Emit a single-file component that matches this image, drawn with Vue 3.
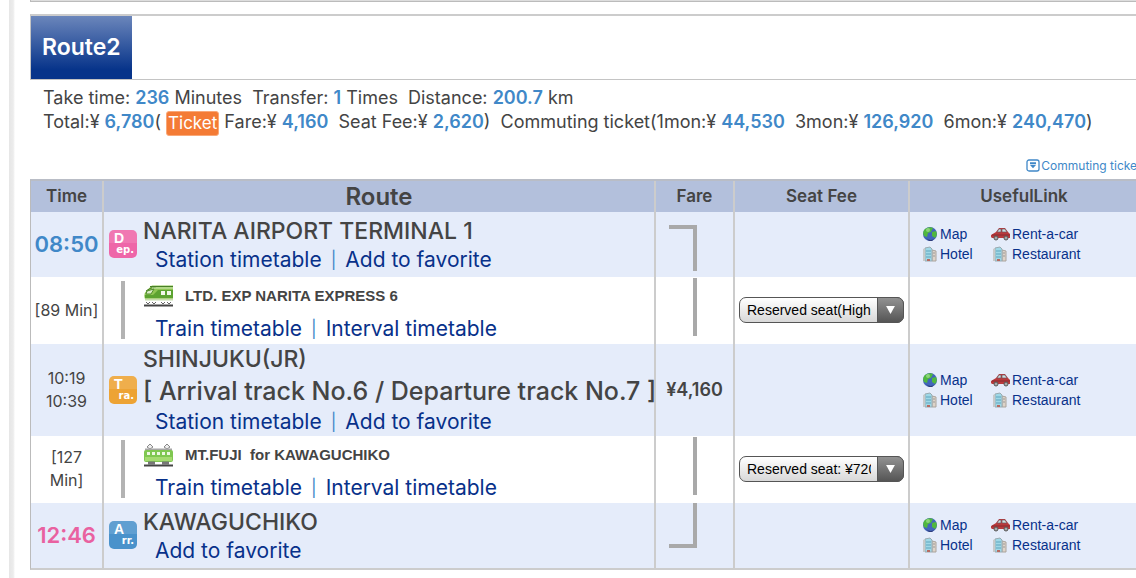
<script setup>
const rows = [
  {
    kind: 'station', mark: ['D', 'ep.'], tone: 'dep', times: ['08:50'], timeClass: 'start',
    name: 'NARITA AIRPORT TERMINAL 1', links: ['Station timetable', 'Add to favorite'],
    fare: 'top', useful: true,
  },
  {
    kind: 'ride', icon: 'express', times: ['[89 Min]'], train: 'LTD. EXP NARITA EXPRESS 6',
    links: ['Train timetable', 'Interval timetable'], fare: 'mid',
    seats: ['Reserved seat(High-season)', 'Non-reserved seat'],
  },
  {
    kind: 'station', mark: ['T', 'ra.'], tone: 'tra', times: ['10:19', '10:39'],
    name: 'SHINJUKU(JR)', track: '[ Arrival track No.6 / Departure track No.7 ]',
    links: ['Station timetable', 'Add to favorite'], price: '¥4,160', useful: true,
  },
  {
    kind: 'ride', icon: 'local', times: ['[127', 'Min]'], train: 'MT.FUJI\u00a0 for KAWAGUCHIKO',
    links: ['Train timetable', 'Interval timetable'], fare: 'mid',
    seats: ['Reserved seat: ¥720', 'Non-reserved seat'],
  },
  {
    kind: 'station', mark: ['A', 'rr.'], tone: 'arr', times: ['12:46'], timeClass: 'goal',
    name: 'KAWAGUCHIKO', links: ['Add to favorite'], fare: 'end', useful: true,
  },
]
const useful = [
  { label: 'Map', icon: 'globe' },
  { label: 'Rent-a-car', icon: 'car' },
  { label: 'Hotel', icon: 'building' },
  { label: 'Restaurant', icon: 'building' },
]
</script>

<template>
  <div class="page">
    <div class="rail"></div>
    <main class="content">
      <div class="previous"></div>
      <header class="routebar"><h2>Route2</h2></header>

      <section class="summary">
        <p>Take time: <b>236</b> Minutes&nbsp; Transfer: <b>1</b>&nbsp;Times&nbsp; Distance: <b>200.7</b> km</p>
        <p>Total:¥ <b>6,780</b>( <span class="ticket">Ticket</span> Fare:¥ <b>4,160</b>&nbsp; Seat Fee:¥ <b>2,620</b>)&nbsp; Commuting ticket(1mon:¥ <b>44,530</b>&nbsp; 3mon:¥ <b>126,920</b>&nbsp; 6mon:¥ <b>240,470</b>)</p>
      </section>

      <div class="more">
        <a href="#">
          <svg width="14" height="13" viewBox="0 0 14 13"><rect x="1" y="1" width="12" height="11" rx="2" fill="#fff" stroke="#4088c8" stroke-width="1.3"/><path d="M4 3.2h6v2H4zM4 6h6L7 9.3z" fill="#4088c8"/></svg>Commuting ticket</a>
      </div>

      <table>
        <colgroup><col class="c-time"><col class="c-route"><col class="c-fare"><col class="c-seat"><col></colgroup>
        <thead>
          <tr><th>Time</th><th class="big">Route</th><th>Fare</th><th>Seat Fee</th><th>UsefulLink</th></tr>
        </thead>
        <tbody>
          <tr v-for="(r, i) in rows" :key="i" :class="r.kind">
            <td class="time" :class="r.timeClass"><div v-for="t in r.times" :key="t">{{ t }}</div></td>
            <td>
              <div class="stop">
                <div class="side">
                  <svg v-if="r.mark" class="mark" width="28" height="28" viewBox="0 0 28 28" :class="r.tone">
                    <rect width="28" height="28" rx="5"/>
                    <path d="M5 0h18a5 5 0 0 1 5 5v8H0V5a5 5 0 0 1 5-5z" fill="#fff" opacity=".12"/>
                    <text x="5" y="13" class="initial">{{ r.mark[0] }}</text>
                    <text x="25" y="23" text-anchor="end" class="rest">{{ r.mark[1] }}</text>
                  </svg>
                  <div v-else class="bar"></div>
                </div>
                <div class="info" :class="{ padded: r.mark && !r.track, ridden: r.train }">
                  <div v-if="r.name" class="name">{{ r.name }}</div>
                  <div v-if="r.track" class="track">{{ r.track }}</div>
                  <div v-if="r.train" class="train">
                    <svg v-if="r.icon === 'express'" width="29" height="22" viewBox="0 0 29 22">
                      <path d="M8 .5h21V14H1Q-1 9 3 5z" fill="#8fc653"/>
                      <path d="M6 1.5h23M2 6Q7 2 12 2" stroke="#477f27" fill="none"/>
                      <path d="M8 3h21" stroke="#d3eabb"/>
                      <path d="M3 6l7-2-3 5H2z" fill="#dceec9" stroke="#518b2d"/>
                      <path d="M1 10h8l5-5h15v8H1z" fill="#5ca331"/>
                      <path d="M17 6h4v4h-4zM23 6h4v4h-4z" fill="#f2f8e9"/>
                      <path d="M1 14.500h28" stroke="#c7dcae" stroke-width="2"/>
                      <path d="M2 17l2 2 2-2M8 17l2 2 2-2M17 17l2 2 2-2M23 17l2 2 2-2" fill="none" stroke="#666"/>
                      <path d="M0 20.500h29" stroke="#444" stroke-width="2"/>
                    </svg>
                    <svg v-else width="29" height="24" viewBox="0 0 29 24">
                      <path d="M6 1L3 4l3 2 3-2zM23 1l-3 3 3 2 3-2z" fill="#eee" stroke="#888"/>
                      <path d="M1 6.500h27" stroke="#a6a6a6" stroke-width="2"/>
                      <rect y="7" width="29" height="12" rx="2" fill="#7fc750"/><path d="M1 14h27v4H1z" fill="#a4db70"/>
                      <path d="M3 9h3v3H3zM8 9h3v3H8zM13 9h3v3h-3zM18 9h3v3h-3zM23 9h3v3h-3z" fill="#edf8e2"/>
                      <path d="M4 20h7M18 20h7" stroke="#777" stroke-width="3"/><path d="M0 22.500h29" stroke="#444" stroke-width="2"/>
                    </svg>
                    <span>{{ r.train }}</span>
                  </div>
                  <div class="links">
                    <template v-for="(l, n) in r.links" :key="l"><i v-if="n">|</i><a href="#">{{ l }}</a></template>
                  </div>
                </div>
              </div>
            </td>
            <td :class="r.price ? 'price' : 'line'">
              <template v-if="r.price">{{ r.price }}</template>
              <div v-else class="seg" :class="r.fare"></div>
            </td>
            <td class="seat">
              <label v-if="r.seats" class="picker">
                <select :aria-label="'Seat for ' + r.train"><option v-for="s in r.seats" :key="s">{{ s }}</option></select>
                <span class="arrow"><svg width="9" height="8" viewBox="0 0 10 9"><path d="M0 0h10L5 9z" fill="#fff"/></svg></span>
              </label>
            </td>
            <td class="useful">
              <div v-if="r.useful" class="grid">
                <a v-for="u in useful" :key="u.label" href="#">
                  <svg v-if="u.icon === 'globe'" width="17" height="16" viewBox="0 0 17 16">
                    <circle cx="8" cy="8" r="7" fill="#4266ba"/><path d="M3 3Q7 0 11 2L9 6 6 7 5 11 2 10Q0 6 3 3zM10 6l4-1q2 4-1 7l-3-2z" fill="#50b83e"/><path d="M4 12q5 4 9 0l-3 3H7z" fill="#303d7b"/><circle cx="6" cy="4" r="2" fill="#a4df91" opacity=".7"/>
                  </svg>
                  <svg v-else-if="u.icon === 'car'" width="20" height="16" viewBox="0 0 20 16">
                    <path d="M0 11V9l5-3 3-4h6l3 4 2 2v4H1z" fill="#b93a3c"/><path d="M6 6l2-3h2v3zM11 3h3l2 3h-5z" fill="#c9e2e3" stroke="#74555b" stroke-width=".7"/><path d="M1 9h18" stroke="#862a31"/><g fill="#aaa" stroke="#555"><circle cx="5" cy="12" r="2"/><circle cx="15" cy="12" r="2"/></g>
                  </svg>
                  <svg v-else width="17" height="16" viewBox="0 0 17 16">
                    <path d="M10 4l4 1v10h-4z" fill="#ddd3c8" stroke="#aaa39c"/><path d="M3 2l5-1 2 2v12H3z" fill="#9fd8e7" stroke="#9aabb1"/><path d="M1 3l2-1v13H1z" fill="#c9c9c9"/><path d="M4 5h5M4 8h5M4 11h5" stroke="#5fa5bd"/><path d="M11 7h2M11 10h2" stroke="#999"/><path d="M5 13h3v2H5z" fill="#b66b62"/>
                  </svg>{{ u.label }}</a>
              </div>
            </td>
          </tr>
        </tbody>
      </table>
    </main>
  </div>
</template>

<style>
html, body { background: #fff; }
</style>
<style scoped>
* { box-sizing: border-box; }
.page { display: flex; min-height: 100vh; overflow: hidden; font-family: Inter, "Noto Sans CJK JP", sans-serif; color: #444; }
.rail { flex: none; width: 6px; margin-left: 9px; background: linear-gradient(90deg, #e6e6e6, #ececec 70%, #fff); }
.content { flex: 1; min-width: 0; margin: 0 -5px 0 15px; }
.previous { height: 2px; background: #ddd; border-bottom: 1px solid #bbb; border-left: 1px solid #bbb; }
.routebar { margin-top: 12px; border: 1px solid #c4c4c4; border-top: 2px solid #ccc; display: flex; }
h2 { margin: 0; padding: 0 11px; font-size: 23px; font-weight: 600; line-height: 63px; color: #fff; background: linear-gradient(#6b86bb, #07348a 85%); }
.summary { padding: 6px 0 0 13px; font-size: 18px; line-height: 24px; white-space: nowrap; }
p { margin: 0; }
b { color: #4088c8; font-weight: 600; }
.ticket { display: inline-block; line-height: 23px; height: 25px; padding: 0 1px; margin: -1px 0; font-size: 17px; color: #fff; background: #f47b35; border: 1px solid #f9a878; border-radius: 3px; vertical-align: middle; }
.more { display: flex; justify-content: flex-end; margin: 22px 0 4px; line-height: 18px; font-size: 12px; }
.more a { color: #4088c8; display: flex; align-items: center; gap: 1px; white-space: nowrap; }
a { color: #08318a; text-decoration: none; }
table { width: 100%; table-layout: fixed; border-collapse: separate; border-spacing: 0; border: 1px solid #bbb; border-top: 2px solid #b9bdc6; border-bottom: 2px solid #ccc; }
.c-time { width: 73px; } .c-route { width: 552px; } .c-fare { width: 79px; } .c-seat { width: 175px; }
th, td { padding: 0; border-right: 2px solid #ccc; }
th { height: 31px; background: #b3c0dc; font-size: 17px; font-weight: 600; line-height: 31px; }
th.big { font-size: 24px; }
.station { background: #e5ecfa; }
.time { text-align: center; font-size: 16px; line-height: 23px; white-space: nowrap; }
.start, .goal { font-size: 22px; font-weight: 600; color: #4088c8; }
.goal { color: #e961a0; }
.stop { display: flex; }
.side { width: 39px; flex: none; padding-left: 5px; display: flex; align-items: center; }
.bar { width: 4px; height: 58px; background: #b3b3b3; margin-left: 12px; }
.mark text { fill: #fff; font-weight: 700; }
.initial { font-family: "Liberation Sans", Arial, sans-serif; font-size: 14px; }
.rest { font-family: "DejaVu Sans", sans-serif; font-size: 10px; }
.dep { fill: #ee66a8; } .tra { fill: #eda334; } .arr { fill: #4a92cb; }
.padded { padding: 4px 0 3px; }
.ridden { padding-bottom: 1px; }
.name { font-size: 23px; font-weight: 500; line-height: 30px; white-space: nowrap; }
.track { font-size: 25px; font-weight: 500; line-height: 34px; white-space: nowrap; }
.train { display: flex; align-items: center; gap: 12px; height: 38px; padding-left: 1px; font: 700 15px "Liberation Sans", Arial, sans-serif; }
.links { display: flex; padding-left: 12px; font-size: 21px; line-height: 28px; white-space: nowrap; }
.links i { font-style: normal; font-size: 17px; color: #4088c8; margin: 0 9px; }
.price { text-align: center; font-size: 18px; font-weight: 600; }
.line { vertical-align: top; }
.seg { width: 28px; margin-left: 13px; border-right: 4px solid #a9a9a9; }
.top { height: 46px; margin-top: 13px; border-top: 4px solid #a9a9a9; }
.mid { height: 58px; margin-top: 1px; }
.end { height: 45px; border-bottom: 4px solid #a9a9a9; }
.seat { padding: 0 4px; }
.picker { position: relative; display: block; }
select { display: block; width: 100%; height: 26px; padding: 0 32px 0 7px; appearance: none; border: 1px solid #555; border-radius: 7px; background: linear-gradient(#fff, #d8d8d8); font: 14px "Liberation Sans", Arial, sans-serif; color: #000; }
.arrow { position: absolute; top: 0; right: 0; width: 27px; height: 26px; display: flex; align-items: center; justify-content: center; background: linear-gradient(#929292, #555); border: 1px solid #555; border-radius: 0 7px 7px 0; pointer-events: none; }
.useful { padding-left: 12px; }
.grid { display: grid; grid-template-columns: 69px 1fr; line-height: 20px; font-family: "Liberation Sans", Arial, sans-serif; font-size: 14px; }
.grid a { display: flex; align-items: center; gap: 1px; }
.grid a:nth-child(4) svg { margin: 0 2px 0 1px; }
</style>
